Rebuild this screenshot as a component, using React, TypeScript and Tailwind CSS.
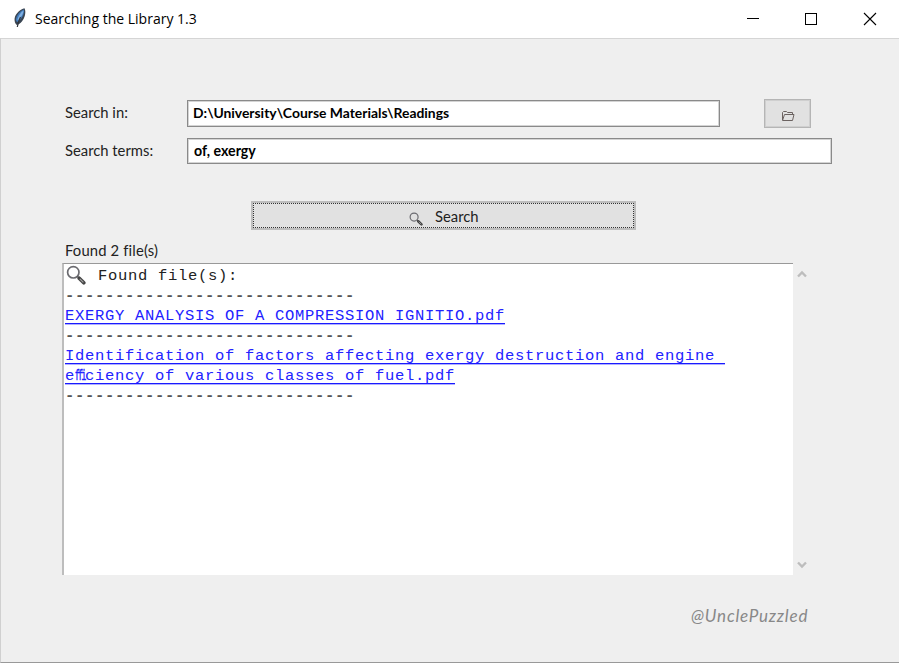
import React from "react";

function Magnifier({ className }: { className: string }) {
  return (
    <svg viewBox="0 0 20 20" className={className} fill="none">
      <circle cx="7.3" cy="7.3" r="5.7" stroke="#6b6b70" strokeWidth="1.700" />
      <path d="M11.5 11.5l2 2" stroke="#555" strokeWidth="1.4" />
      <path d="M13.2 13.2l4.6 4.6" stroke="#444" strokeWidth="3.6" strokeLinecap="round" />
      <path d="M13.8 13.8l3.6 3.6" stroke="#a5a5a5" strokeWidth="1.100" />
    </svg>
  );
}

function Feather() {
  return (
    <svg viewBox="0 0 14 20" className="h-5 w-3.5" fill="none">
      <path d="M11.5 0.3C7.5 1 2.500 5.500 1.600 10.500c-.3 2.500.4 5 2.200 6.500C7.500 16 11 12 12 7c.6-2.500.4-5-.5-6.700z" fill="#3a4552" />
      <path d="M10.800 1.500C7 3 3.300 7 2.800 12l1.300 2.300C8 12 12 6 10.800 1.500z" fill="#3f78b8" />
      <path d="M10.500 2.500C8 4 5 8 4.300 12.500c3-2 6-6 6.200-10z" fill="#7fb0e2" />
      <path d="M7.500 9C6 12 4.800 15 4.300 19" stroke="#30353c" strokeWidth="1.200" />
    </svg>
  );
}

function Dashes() {
  return <div className="h-5 font-bold whitespace-pre text-[#555]">-----------------------------</div>;
}

export default function App() {
  return (
    <div className="flex h-[663px] w-[899px] flex-col overflow-hidden bg-[#efefef] font-['Lato',sans-serif] text-[#222]">
      <header className="flex h-[38px] shrink-0 bg-white">
        <div className="mt-2 ml-[13px] w-[22px] shrink-0"><Feather /></div>
        <h1 className="grow pt-[9px] font-['Open_Sans',sans-serif] text-[14px] leading-5 text-black">Searching the Library 1.3</h1>
        <svg viewBox="0 0 160 38" className="h-[38px] w-[160px]" fill="none" stroke="#000" shapeRendering="crispEdges">
          <path d="M8 18.500h12" />
          <rect x="66.500" y="13.500" width="11" height="11" />
          <path d="M125 13l12 12M137 13l-12 12" shapeRendering="geometricPrecision" strokeWidth="1.1" />
        </svg>
      </header>
      <main className="grow border-t border-b border-l border-t-[#d5d5d5] border-b-[#999] border-l-[#d0d0d0] pl-[61px]">
        <div className="mt-[60px] flex h-[29px]">
          <label className="w-[125px] pt-[3px] pl-[3px] text-[14.8px] leading-5">Search in:</label>
          <div className="mt-px h-[27px] w-[533px] border border-[#8a8a8a] bg-white pt-0.5 pl-[5px] text-[13.900px] leading-5 font-bold text-black shadow-[inset_0_0_0_1px_#d4d4d4]">D:\University\Course Materials\Readings</div>
          <button className="ml-[44px] flex h-[29px] w-[47px] items-center justify-center border border-[#b5b5b5] bg-[#e1e1e1] pt-1 shadow-[inset_0_0_0_1px_#cfcfcf]">
            <svg viewBox="0 0 14 12" className="h-3 w-3.5" fill="none" stroke="#6b6260"><path d="M1.500 10V2.500l1-1h3l1 1h5v2M1.500 10.500l2-6h9.500l-1.500 6z" /></svg>
          </button>
        </div>
        <div className="mt-[10px] flex h-[26px]">
          <label className="w-[125px] pt-[2px] pl-[3px] text-[14.8px] leading-5">Search terms:</label>
          <div className="h-[26px] w-[645px] border border-[#8a8a8a] bg-white pt-0.5 pl-[6px] text-[14.200px] leading-5 font-bold text-black shadow-[inset_0_0_0_1px_#d4d4d4]">of, exergy</div>
        </div>
        <button className="mt-[37px] ml-[189px] flex h-[29px] w-[385px] border-2 border-[#bdbdbd] bg-[#e1e1e1]">
          <span className="flex h-[25px] w-full border border-dotted border-[#333] text-[14.800px] leading-6">
            <Magnifier className="mt-2 ml-[155px] h-3.5 w-3.5" />
            <span className="ml-3">Search</span>
          </span>
        </button>
        <p className="mt-[10px] ml-[3px] h-[23px] text-[14.800px] leading-5 tracking-[0.15px]">Found 2 file(s)</p>
        <div className="flex h-[312px]">
          <section className="w-[731px] border-t border-l-2 border-t-[#999] border-l-[#bdbdbd] bg-white pt-[2px] pl-px font-['Liberation_Mono',monospace] text-[15.500px] leading-5 tracking-[0.7px]">
            <div className="flex h-5 whitespace-pre"><Magnifier className="-mt-px mr-3 ml-px h-5 w-5" />Found file(s):</div>
            <Dashes />
            <div className="flex h-5 text-[#2222ff]"><a className="h-[18px] border-b border-b-[#1a1aff] whitespace-pre shadow-[0_1px_0_#b0b0ff]">EXERGY ANALYSIS OF A COMPRESSION IGNITIO.pdf</a></div>
            <Dashes />
            <div className="flex h-5 text-[#2222ff]"><a className="h-[18px] border-b border-b-[#1a1aff] whitespace-pre shadow-[0_1px_0_#b0b0ff]">Identification of factors affecting exergy destruction and engine </a></div>
            <div className="flex h-5 text-[#2222ff]"><a className="flex h-[18px] border-b border-b-[#1a1aff] whitespace-pre shadow-[0_1px_0_#b0b0ff]">e<span className="w-[10px]"><span className="block w-[20px] origin-left scale-x-[0.5] tracking-[-2.700px] [-webkit-text-stroke:0.6px_#2222ff]">ffi</span></span>ciency of various classes of fuel.pdf</a></div>
            <Dashes />
          </section>
          <div className="flex w-[18px] flex-col items-center justify-between pt-[7px] pb-[6px]">
            <svg viewBox="0 0 10 8" className="h-2 w-2.5" fill="none" stroke="#bdbdbd" strokeWidth="2.400"><path d="M1 6.500l4-4 4 4" /></svg>
            <svg viewBox="0 0 10 8" className="h-2 w-2.5" fill="none" stroke="#bdbdbd" strokeWidth="2.400"><path d="M1 1.500l4 4 4-4" /></svg>
          </div>
        </div>
        <footer className="mt-[31px] ml-[629px] text-[17px] leading-5 tracking-[0.8px] text-[#888] italic">@UnclePuzzled</footer>
      </main>
    </div>
  );
}
